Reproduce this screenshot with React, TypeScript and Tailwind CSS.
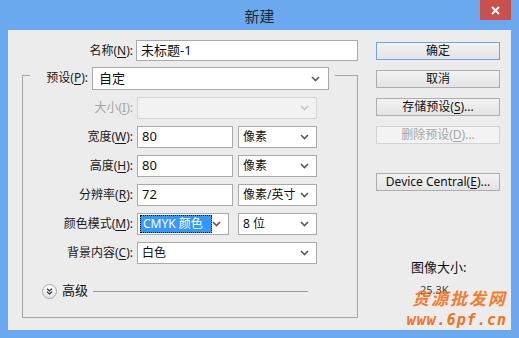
import React from "react";

const font = "font-['Noto_Sans','Noto_Sans_CJK_SC',sans-serif]";

const Chevron = ({ disabled }: { disabled?: boolean }) => (
  <svg width="9" height="6" viewBox="0 0 9 6" className="shrink-0">
    <path d="M1 1 L4.5 4.5 L8 1" fill="none" stroke={disabled ? "#c4c4c4" : "#5a5a5a"} strokeWidth="1.6" />
  </svg>
);

const Key = ({ k }: { k: string }) => <span className="underline underline-offset-[2px]">{k}</span>;

const Label = ({ text, k, w, disabled }: { text: string; k: string; w: string; disabled?: boolean }) => (
  <div className={`${w} shrink-0 text-right whitespace-nowrap ${disabled ? "text-[#a3a3a3]" : "text-[#1a1a1a]"}`}>
    {text}(<Key k={k} />):
  </div>
);

const Select = ({ value, w, disabled, children }: { value?: string; w: string; disabled?: boolean; children?: React.ReactNode }) => (
  <div
    className={`${w} h-[22px] flex items-center justify-between pl-[4px] pr-[7px] border ${
      disabled ? "bg-[#f2f2f2] border-[#d6d6d6]" : "bg-white border-[#a9a9a9]"
    }`}
  >
    {children ?? <span className="text-[#111] text-[12px] whitespace-nowrap">{value}</span>}
    <Chevron disabled={disabled} />
  </div>
);

const Input = ({ value, w }: { value: string; w: string }) => (
  <div className={`${w} h-[22px] flex items-center pl-[4px] bg-white border border-[#a9a9a9] text-[#111] text-[13px]`}>{value}</div>
);

const Button = ({ children, disabled, primary }: { children: React.ReactNode; disabled?: boolean; primary?: boolean }) => (
  <div
    className={`w-[124px] h-[18px] flex items-center justify-center border text-[12px] leading-none ${
      disabled
        ? "bg-[#f3f3f3] border-[#d3d3d3] text-[#a6a6a6]"
        : primary
        ? "bg-gradient-to-b from-[#f2f2f2] to-[#e4e4e4] border-[#6ea6dc] text-[#111]"
        : "bg-gradient-to-b from-[#f2f2f2] to-[#e4e4e4] border-[#adadad] text-[#111]"
    }`}
  >
    {children}
  </div>
);

export default function App() {
  return (
    <div className={`w-[519px] h-[338px] bg-[#6aa8ef] flex flex-col overflow-hidden ${font} text-[12px]`}>
      {/* title bar */}
      <div className="relative h-[30px] shrink-0 flex items-center justify-center">
        <span className="text-[15px] text-[#1e2a36] pt-[2px]">新建</span>
        <div className="absolute right-[8px] top-0 w-[31px] h-[20px] bg-[#c9514d] flex items-center justify-center">
          <svg width="9" height="9" viewBox="0 0 9 9">
            <path d="M1 1 L8 8 M8 1 L1 8" stroke="#fff" strokeWidth="2" />
          </svg>
        </div>
      </div>

      <div className="relative mx-[8px] mb-[8px] flex-1 bg-[#ececec] flex">
        {/* left column */}
        <div className="w-[350px] pt-[10px] flex flex-col">
          <div className="flex items-center gap-[3px] h-[21px]">
            <Label text="名称" k="N" w="w-[125px]" />
            <div className="w-[222px] h-[21px] flex items-center pl-[4px] bg-white border border-[#a9a9a9] text-[#111] text-[13px]">
              未标题-1
            </div>
          </div>

          <fieldset className="ml-[14px] mt-[6px] w-[336px] border border-[#a6a6a6] px-[7px] pb-[18px]">
            <legend className="h-[17px] pl-[13px] pr-[6px]">
              <div className="flex items-start gap-[4px]">
                <div className="h-[22px] flex items-center">
                  <Label text="预设" k="P" w="w-[45px]" />
                </div>
                <div className="w-[237px] h-[23px] flex items-center justify-between pl-[6px] pr-[8px] bg-white border border-[#a9a9a9]">
                  <span className="text-[#111] text-[13px]">自定</span>
                  <Chevron />
                </div>
              </div>
            </legend>

            <div className="pt-[13px] flex flex-col gap-[7px]">
              <div className="flex items-center gap-[4px]">
                <Label text="大小" k="I" w="w-[103px]" disabled />
                <Select w="w-[180px]" disabled />
              </div>
              <div className="flex items-center gap-[4px]">
                <Label text="宽度" k="W" w="w-[103px]" />
                <Input value="80" w="w-[96px]" />
                <div className="ml-[1px]">
                  <Select value="像素" w="w-[79px]" />
                </div>
              </div>
              <div className="flex items-center gap-[4px]">
                <Label text="高度" k="H" w="w-[103px]" />
                <Input value="80" w="w-[96px]" />
                <div className="ml-[1px]">
                  <Select value="像素" w="w-[79px]" />
                </div>
              </div>
              <div className="flex items-center gap-[4px]">
                <Label text="分辨率" k="R" w="w-[103px]" />
                <Input value="72" w="w-[96px]" />
                <div className="ml-[1px]">
                  <Select value="像素/英寸" w="w-[79px]" />
                </div>
              </div>
              <div className="flex items-center gap-[4px]">
                <Label text="颜色模式" k="M" w="w-[103px]" />
                <div className="w-[92px] h-[22px] flex items-center justify-between pl-[2px] pr-[7px] bg-white border border-[#a9a9a9]">
                  <span className="w-[72px] h-[18px] flex items-center pl-[2px] bg-[#3399ff] text-white text-[12px] whitespace-nowrap border border-dotted border-black">
                    CMYK 颜色
                  </span>
                  <Chevron />
                </div>
                <div className="ml-[5px]">
                  <Select value="8 位" w="w-[79px]" />
                </div>
              </div>
              <div className="flex items-center gap-[4px]">
                <Label text="背景内容" k="C" w="w-[103px]" />
                <Select value="白色" w="w-[180px]" />
              </div>
            </div>

            <div className="mt-[19px] ml-[12px] h-[16px] flex items-center">
              <div className="w-[15px] h-[15px] rounded-full border border-[#a8a8a8] bg-gradient-to-b from-white to-[#e2e2e2] flex items-center justify-center">
                <svg width="7" height="7" viewBox="0 0 7 7">
                  <path d="M1 0.8 L3.5 3 L6 0.8 M1 3.8 L3.5 6 L6 3.8" fill="none" stroke="#333" strokeWidth="1.2" />
                </svg>
              </div>
              <span className="ml-[5px] text-[13px] text-[#111]">高级</span>
              <div className="ml-[5px] w-[215px] h-px bg-[#9a9a9a]" />
            </div>
          </fieldset>
        </div>

        {/* right column */}
        <div className="ml-[18px] pt-[12px] flex flex-col">
          <div className="flex flex-col gap-[10px]">
            <Button primary>确定</Button>
            <Button>取消</Button>
            <Button>
              存储预设(<Key k="S" />)...
            </Button>
            <Button disabled>
              删除预设(<Key k="D" />)...
            </Button>
          </div>
          <div className="mt-[29px]">
            <Button>
              Device Central(<Key k="E" />)...
            </Button>
          </div>
          <div className="mt-[67px] pl-[35px] text-[13px] text-[#111]">图像大小:</div>
          <div className="mt-[4px] pl-[44px] text-[11px] text-[#444]">25.3K</div>
        </div>

        {/* watermark */}
        <div className="absolute right-[4px] bottom-[2px] flex flex-col items-end text-[#f3731c] font-bold italic leading-none pointer-events-none">
          <span className="text-[17px] tracking-[2px] opacity-90">货源批发网</span>
          <span className="mt-[6px] text-[15px] tracking-[1px] font-['DejaVu_Sans_Mono',monospace]">www.6pf.cn</span>
        </div>
      </div>
    </div>
  );
}
